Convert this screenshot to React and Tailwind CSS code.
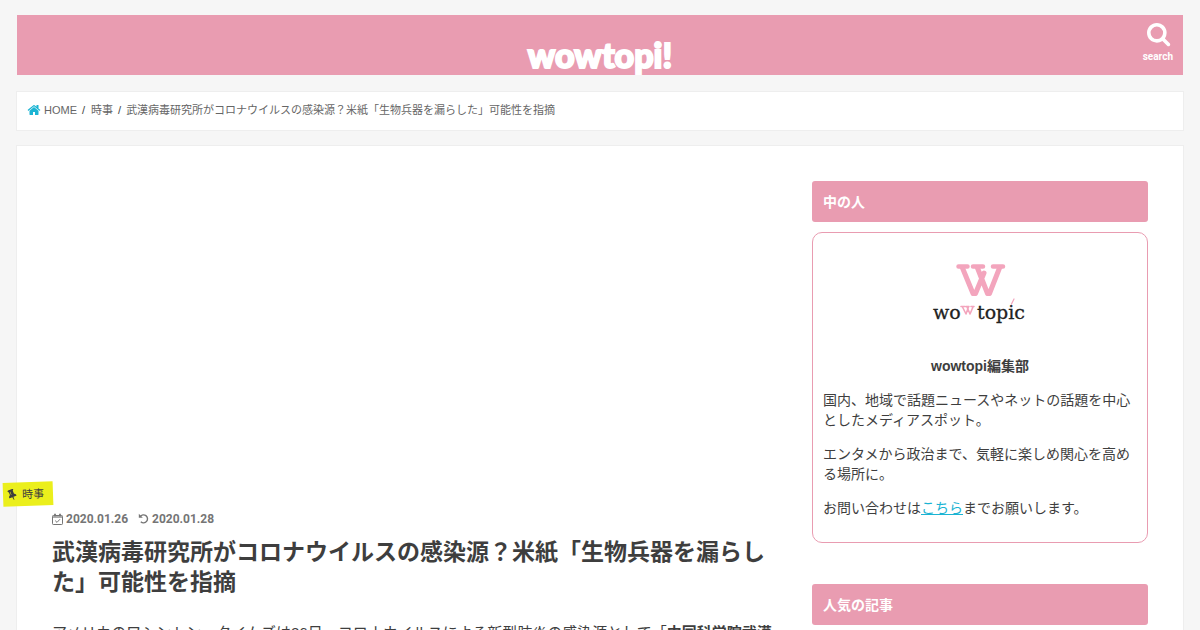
const HEADLINE = "武漢病毒研究所がコロナウイルスの感染源？米紙「生物兵器を漏らした」可能性を指摘";

function SearchIcon({ className }) {
  return (
    <svg className={className} viewBox="0 0 1792 1792" fill="currentColor" aria-hidden="true">
      <path d="M1152 704q0-185-131.5-316.5t-316.5-131.5-316.5 131.5-131.5 316.5 131.5 316.5 316.5 131.5 316.5-131.5 131.5-316.5zm512 832q0 52-38 90t-90 38q-54 0-90-38l-343-342q-179 124-399 124-143 0-273.5-55.5t-225-150-150-225-55.5-273.5 55.5-273.5 150-225 225-150 273.5-55.5 273.5 55.5 225 150 150 225 55.5 273.5q0 220-124 399l343 343q37 37 37 90z" />
    </svg>
  );
}

function HomeIcon({ className }) {
  return (
    <svg className={className} viewBox="0 0 1792 1792" fill="currentColor" aria-hidden="true">
      <path d="M1472 992v480q0 26-19 45t-45 19h-384v-384h-256v384h-384q-26 0-45-19t-19-45v-480q0-1 .5-3t.5-3l575-474 575 474q1 2 1 6zm223-69l-62 74q-8 9-21 11h-3q-13 0-21-7l-692-577-692 577q-12 8-24 7-13-2-21-11l-62-74q-8-10-7-23.5t11-21.5l719-599q32-26 76-26t76 26l244 204v-195q0-14 9-23t23-9h192q14 0 23 9t9 23v408l219 182q10 8 11 21.5t-7 23.5z" />
    </svg>
  );
}

function PinIcon({ className }) {
  return (
    <svg className={className} viewBox="0 0 1792 1792" fill="currentColor" aria-hidden="true">
      <path d="M800 864v-448q0-14-9-23t-23-9-23 9-9 23v448q0 14 9 23t23 9 23-9 9-23zm672 352q0 26-19 45t-45 19h-429l-51 483q-2 12-10.5 20.5t-20.5 8.5h-1q-27 0-32-27l-76-485h-404q-26 0-45-19t-19-45q0-123 78.5-221.5t177.5-98.5v-512q-52 0-90-38t-38-90 38-90 90-38h640q52 0 90 38t38 90-38 90-90 38v512q99 0 177.5 98.5t78.5 221.5z" />
    </svg>
  );
}

function CalendarIcon({ className }) {
  return (
    <svg className={className} viewBox="0 0 12 13" fill="none" stroke="currentColor" aria-hidden="true">
      <rect x="0.5" y="2.5" width="10" height="9" rx="0.8" />
      <path d="M1 4h9" strokeWidth="1.2" />
      <path d="M3 0.8v2.4M8 0.8v2.4" strokeWidth="1.8" />
      <path d="M3.2 7.6l1.8 1.8 3-3.2" />
    </svg>
  );
}

function UndoIcon({ className }) {
  return (
    <svg className={className} viewBox="0 0 12 12" fill="none" stroke="currentColor" aria-hidden="true">
      <path d="M2.2 3.6A4 4 0 1 1 2.8 8.8" strokeWidth="1.4" />
      <path d="M0.8 0.8v4h4z" fill="currentColor" stroke="none" />
    </svg>
  );
}

function ProfileLogo() {
  return (
    <svg className="h-[100px] w-[100px]" viewBox="0 0 100 100" role="img" aria-label="wowtopic">
      <g fill="none" stroke="#f3a5bd" strokeLinecap="round" strokeLinejoin="round">
        <path d="M28.500 23.500h9M43 23.500h10M63 23.500h10" strokeWidth="4.500" />
        <path d="M32.500 25l10.500 25.500M43.500 50.500h2L54 30M47.500 25l10 25.500M58 50.500h1.500L69.500 25" strokeWidth="5" />
        <path d="M31 63.500h4M36 63.500h3M41 63.500h3M32.500 64l3.500 7 2.500-7M37 64l3 7 3-7" strokeWidth="1.600" />
        <path d="M84 56l-2.500 5" strokeWidth="1.200" />
      </g>
      <g fill="#222222" stroke="#222222" strokeWidth="0.300" fontFamily="'DejaVu Serif', serif" fontSize="19">
        <text x="3" y="76">wo</text>
        <text x="47" y="76">topic</text>
      </g>
    </svg>
  );
}

function SideHeading({ children }) {
  return (
    <h2 className="rounded-[3px] bg-[#e99cb1] px-[11px] pt-[11px] pb-[10px] text-sm leading-5 font-bold text-white">
      {children}
    </h2>
  );
}

export default function App() {
  return (
    <div className="h-screen overflow-hidden bg-[#f6f6f6] px-[17px] pt-[15px] font-['Liberation_Sans','Noto_Sans_CJK_JP',sans-serif] text-[#3e3e3e]">
      <header className="grid h-[60px] grid-cols-[1fr_auto_1fr] bg-[#e99cb1] text-white">
        <a
          href="#top"
          className="col-start-2 pt-[17px] font-['Lato','Noto_Sans',sans-serif] text-[34px] leading-[46px] font-black [stroke-linejoin:round] [-webkit-text-stroke:2px_white]"
        >
          wowtopi!
        </a>
        <button type="button" className="flex flex-col items-center justify-self-end px-[10px] pt-[8px]">
          <SearchIcon className="ml-[3px] h-[25px] w-[25px]" />
          <span className="mt-[2px] font-['Roboto',sans-serif] text-[10px] leading-[14px] font-bold">search</span>
        </button>
      </header>

      <nav
        aria-label="Breadcrumb"
        className="-mx-px mt-4 border border-[#eeeeee] bg-white px-[10px] pt-[8px] pb-[10px] text-[11px] leading-5 text-[#666666]"
      >
        <ol className="flex items-center">
          <li className="flex items-center">
            <a href="#home" className="flex items-center gap-[3px]">
              <HomeIcon className="h-[14px] w-[14px] text-[#1bb4d3]" />
              HOME
            </a>
            <span className="mr-[6px] ml-[5px] text-[#3e3e3e]">/</span>
          </li>
          <li>
            <a href="#news">時事</a>
            <span className="mx-[5px] text-[#3e3e3e]">/</span>
          </li>
          <li>{HEADLINE}</li>
        </ol>
      </nav>

      <div className="-mx-px mt-[14px] flex items-start border border-[#eeeeee] bg-white px-[35px] pt-[35px]">
        <main className="relative min-w-0 flex-1 pt-[330px] pr-[35px]">
          <a
            href="#news"
            className="absolute top-[301px] left-[-49px] flex h-6 w-[50px] -rotate-2 items-center gap-[4px] bg-[#ebef1c] pl-[3px] text-[11px]"
          >
            <PinIcon className="h-3 w-3 -rotate-[20deg]" />
            時事
          </a>
          <div className="flex items-center gap-[10px] font-['Roboto',sans-serif] text-xs leading-4 font-bold text-[#757575]">
            <span className="flex items-center gap-[2px]">
              <CalendarIcon className="h-[13px] w-3" />
              <time dateTime="2020-01-26">2020.01.26</time>
            </span>
            <span className="flex items-center gap-[2px]">
              <UndoIcon className="h-3 w-3" />
              <time dateTime="2020-01-28">2020.01.28</time>
            </span>
          </div>
          <h1 className="mt-[10px] text-[23px] leading-[30px] font-bold">{HEADLINE}</h1>
          <p className="mt-[22px] text-[15px] leading-7">
            アメリカのワシントン・タイムズは26日、コロナウイルスによる新型肺炎の感染源として「
            <strong>中国科学院武漢</strong>
          </p>
        </main>

        <aside className="w-[336px] shrink-0">
          <SideHeading>中の人</SideHeading>
          <section className="mt-[10px] rounded-[10px] border border-[#e99cb1] px-[10px] pt-[10px] pb-[24px] text-sm leading-5">
            <div className="flex justify-center">
              <ProfileLogo />
            </div>
            <p className="mt-[13px] text-center font-bold">wowtopi編集部</p>
            <p className="mt-[14px]">国内、地域で話題ニュースやネットの話題を中心としたメディアスポット。</p>
            <p className="mt-[14px]">エンタメから政治まで、気軽に楽しめ関心を高める場所に。</p>
            <p className="mt-[14px]">
              お問い合わせは
              <a href="#contact" className="text-[#1bb4d3] underline">
                こちら
              </a>
              までお願いします。
            </p>
          </section>
          <div className="mt-[41px]">
            <SideHeading>人気の記事</SideHeading>
          </div>
        </aside>
      </div>
    </div>
  );
}
